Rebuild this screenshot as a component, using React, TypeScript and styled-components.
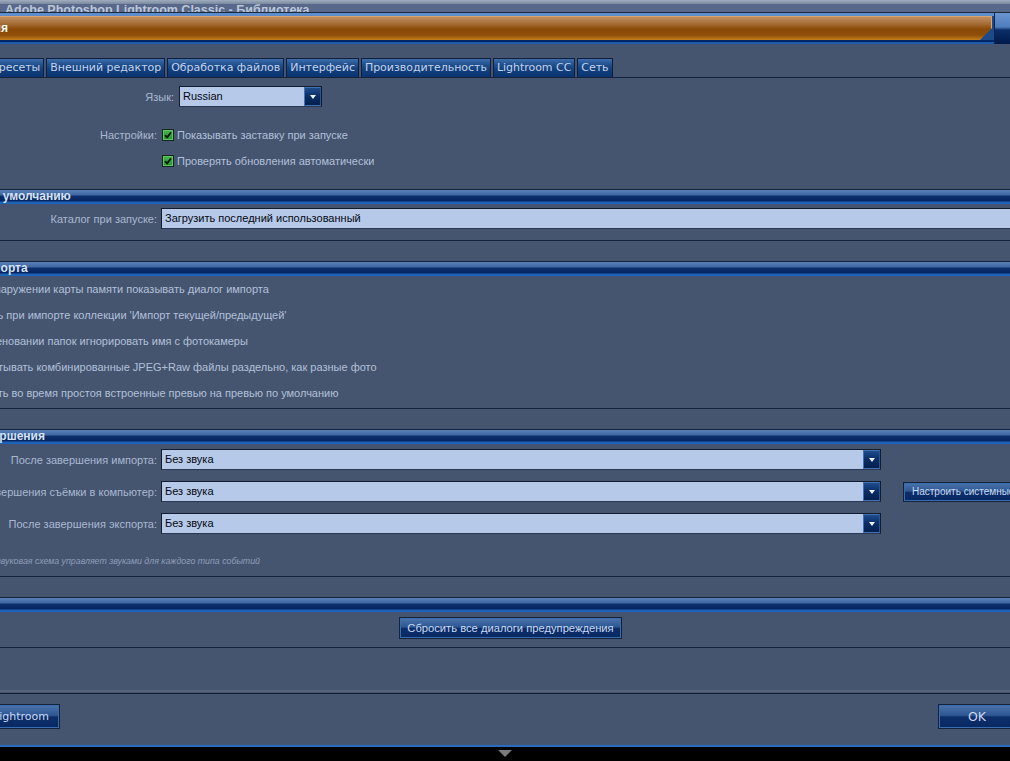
import React from 'react';
import styled, { createGlobalStyle } from 'styled-components';

const GlobalStyle = createGlobalStyle`
  html, body { margin: 0; padding: 0; background: #000; }
  body {
    width: 1010px;
    height: 761px;
    overflow: hidden;
    font-family: "Liberation Sans", Arial, sans-serif;
  }
`;

const Screen = styled.div`
  width: 1010px;
  height: 761px;
  overflow: hidden;
  display: flex;
  flex-direction: column;
  background: #000;
`;

const AppTitleBar = styled.div`
  position: relative;
  flex: none;
  height: 13px;
  box-sizing: border-box;
  overflow: hidden;
  background: #58688a;
  border-bottom: 1px solid #1a2840;

  &::before {
    content: '';
    position: absolute;
    left: 0;
    right: 0;
    top: 0;
    height: 4px;
    z-index: 1;
    background: linear-gradient(#a0adbf, #7a899f);
  }
`;

const AppTitle = styled.div`
  padding-left: 5px;
  margin-top: 3px;
  line-height: 14px;
  white-space: nowrap;
  font: bold 12.5px "Liberation Sans", Arial, sans-serif;
  color: #bcc7d8;
`;

const Dialog = styled.div`
  flex: none;
  height: 734px;
  width: 1212px;
  margin-left: -100px;
  display: flex;
  flex-direction: column;
`;

const DialogHeader = styled.div`
  flex: none;
  height: 31px;
  display: flex;
  gap: 2px;
  background: linear-gradient(#5d8dcb 0 3px, #1d4a8a 3px 27px, #042660 27px 29px, #1b5bb0 29px 31px);
`;

const OrangeBar = styled.div`
  flex: 1;
  margin: 3px 0 4px;
  display: flex;
  align-items: center;
  clip-path: polygon(0 0, 100% 0, 100% 50%, calc(100% - 12px) 100%, 0 100%);
  background: linear-gradient(#c39468 0%, #a8703a 30%, #8a4a08 55%, #8f4f0a 80%, #c47e18 100%);
  box-shadow: inset 0 1px 0 #d9a56c, inset -1px 0 0 #d9a56c;
`;

const TitleSlot = styled.div`
  flex: none;
  width: 108px;
  display: flex;
  justify-content: flex-end;
`;

const DialogTitle = styled.span`
  white-space: nowrap;
  font: bold 12px "Liberation Sans", Arial, sans-serif;
  color: #fff;
`;

const HeaderCap = styled.div`
  flex: none;
  width: 117px;
  border-left: 1px solid #0e2345;
  background: linear-gradient(#6a95cf 0, #4f7dbd 14px, #0b2d66 17px, #001a4d 100%);
`;

const Body = styled.div`
  flex: 1;
  min-height: 0;
  display: flex;
  flex-direction: column;
  background: #46556f;
  border-bottom: 2px solid #2b6cc3;
`;

const TabBar = styled.div`
  flex: none;
  margin-top: 14px;
  height: 20px;
  box-sizing: border-box;
  padding-left: 19px;
  display: flex;
  align-items: flex-end;
  gap: 2px;
  border-bottom: 1px solid #17233a;
`;

const Tab = styled.div<{ $active?: boolean }>`
  height: 19px;
  box-sizing: border-box;
  padding: 0 3px;
  border: 1px solid #0f1f3c;
  border-bottom: 0;
  white-space: nowrap;
  font: 11px "DejaVu Sans", Verdana, sans-serif;
  letter-spacing: -0.03px;
  line-height: 17px;
  color: ${(p) => (p.$active ? '#e0e8f4' : '#c4d3ea')};
  background: ${(p) =>
    p.$active ? '#46556f' : 'linear-gradient(#3e6dac 0, #22518f 30%, #123f7c 60%, #0b3372 100%)'};
`;

const GeneralBlock = styled.div`
  flex: none;
  padding-top: 8px;
  display: flex;
  flex-direction: column;
`;

const FormRow = styled.div<{ $gap: number }>`
  display: flex;
  align-items: center;
  gap: ${(p) => p.$gap}px;
  height: 21px;
`;

const LabelSlot = styled.div<{ $width: number }>`
  flex: none;
  width: ${(p) => p.$width}px;
  display: flex;
  justify-content: flex-end;
  white-space: nowrap;
  font-size: 11px;
  color: #a9b8d1;
`;

const SettingsLabel = styled(LabelSlot)`
  margin-right: 2px;
`;

const Select = styled.div<{ $width?: number }>`
  display: flex;
  height: 21px;
  box-sizing: border-box;
  ${(p) => (p.$width ? `width: ${p.$width}px; flex: none;` : 'flex: 1;')}
  border: 1px solid #121c2e;
  border-bottom-color: #2a3752;
  background: #b6c9e9;
`;

const SelectValue = styled.div`
  flex: 1;
  padding-left: 3px;
  white-space: nowrap;
  overflow: hidden;
  font-size: 11px;
  line-height: 19px;
  color: #05080f;
`;

const SelectArrow = styled.div`
  flex: none;
  width: 15px;
  display: flex;
  align-items: center;
  justify-content: center;
  border: 1px solid #4272b2;
  border-right-color: #2a5594;
  background: linear-gradient(#1f4c8c, #0a2c66 50%, #04204f);

  &::after {
    content: '';
    border-left: 3.5px solid transparent;
    border-right: 3.5px solid transparent;
    border-top: 4px solid #f0f4fa;
  }
`;

const CheckRow = styled.div<{ $indent: number }>`
  height: 26px;
  display: flex;
  align-items: center;
  gap: 3px;
  padding-left: ${(p) => p.$indent}px;
  white-space: nowrap;
`;

const SettingsRows = styled.div`
  margin-top: 15px;
`;

const CheckBox = styled.span`
  flex: none;
  width: 12px;
  height: 12px;
  box-sizing: border-box;
  display: flex;
  align-items: center;
  justify-content: center;
  border: 1px solid #13261a;
  background: linear-gradient(#47b54a, #23952b);
  box-shadow: inset 0 0 0 1px #62c466;
`;

const CheckText = styled.span`
  font-size: 11px;
  color: #b1c0da;
`;

const Section = styled.section`
  flex: none;
  margin-top: 20px;

  &:first-of-type {
    margin-top: 15px;
  }
`;

const SectionHeader = styled.div`
  height: 14px;
  border-top: 1px solid #16223a;
  padding-left: 35px;
  white-space: nowrap;
  font: bold 12px "Liberation Sans", Arial, sans-serif;
  line-height: 13px;
  color: #d7e2f3;
  background: linear-gradient(#5a80b6 0, #3f68a4 5px, #0d2f6a 6px, #062660 11px, #1e63ba 12px, #1e63ba 14px);
`;

const SectionBody = styled.div<{ $top: number; $bottom: number }>`
  padding-top: ${(p) => p.$top}px;
  padding-bottom: ${(p) => p.$bottom}px;
  border-bottom: 1px solid #16223a;
  padding-right: 12px;
`;

const SoundRows = styled.div`
  display: flex;
  flex-direction: column;
  gap: 11px;
`;

const Note = styled.div`
  margin-top: 20px;
  padding-left: 46px;
  height: 14px;
  line-height: 14px;
  white-space: nowrap;
  font-style: italic;
  font-size: 8.8px;
  color: #8e9dba;
`;

const Button = styled.button<{ $size?: 'small' | 'large' }>`
  flex: none;
  box-sizing: border-box;
  height: ${(p) => (p.$size === 'large' ? 25 : p.$size === 'small' ? 20 : 22)}px;
  min-width: ${(p) => (p.$size === 'large' ? 78 : 0)}px;
  padding: 0 ${(p) => (p.$size === 'small' ? 8 : p.$size === 'large' ? 10 : 7)}px;
  margin: 0;
  white-space: nowrap;
  border: 1px solid #15223a;
  box-shadow: inset 0 0 0 1px #3a6cb0;
  background: linear-gradient(#4c74ac 0%, #2d5793 45%, #0c2e6a 52%, #082862 100%);
  color: #cbd9f0;
  font-family: ${(p) =>
    p.$size === 'large' ? '"DejaVu Sans", Verdana, sans-serif' : '"Liberation Sans", Arial, sans-serif'};
  font-size: ${(p) => (p.$size === 'large' ? 11 : p.$size === 'small' ? 10 : 11.2)}px;
  cursor: pointer;
`;

const OkButton = styled(Button)`
  font-size: 12.5px;
`;

const SideButton = styled(Button)`
  margin-left: 18px;
`;

const ResetRow = styled.div`
  display: flex;
  justify-content: center;
  padding-left: 21px;
`;

const Spacer = styled.div`
  flex: 1;
`;

const Footer = styled.div`
  flex: none;
  height: 55px;
  box-sizing: border-box;
  display: flex;
  align-items: flex-start;
  gap: 8px;
  padding: 12px 10px 0 0;
  border-top: 2px solid #56637b;
  background: linear-gradient(#46556f 0 1px, #131d31 1px 2px, #46556f 2px);
`;

const FooterLeft = styled.div`
  flex: none;
  width: 160px;
  display: flex;
  justify-content: flex-end;
`;

const BottomStrip = styled.div`
  flex: 1;
  display: flex;
  justify-content: center;
  padding-top: 3px;
  background: #000;
`;

const DownTriangle = styled.span`
  width: 0;
  height: 0;
  border-left: 7px solid transparent;
  border-right: 7px solid transparent;
  border-top: 7px solid #7b7b7b;
`;

const tabs = [
  'Основные',
  'Пресеты',
  'Внешний редактор',
  'Обработка файлов',
  'Интерфейс',
  'Производительность',
  'Lightroom CC',
  'Сеть',
];

const importOptions = [
  'При обнаружении карты памяти показывать диалог импорта',
  "Выбрать при импорте коллекции 'Импорт текущей/предыдущей'",
  'При именовании папок игнорировать имя с фотокамеры',
  'Обрабатывать комбинированные JPEG+Raw файлы раздельно, как разные фото',
  'Заменить во время простоя встроенные превью на превью по умолчанию',
];

const sounds = [
  { label: 'После завершения импорта:', value: 'Без звука', side: false },
  { label: 'После завершения съёмки в компьютер:', value: 'Без звука', side: true },
  { label: 'После завершения экспорта:', value: 'Без звука', side: false },
];

const Check = () => (
  <CheckBox>
    <svg width="8" height="8" viewBox="0 0 8 8">
      <path d="M1 4.2 L3.1 6.3 L7 1.4" fill="none" stroke="#051a06" strokeWidth="1.8" />
    </svg>
  </CheckBox>
);

const App: React.FC = () => {
  return (
    <Screen>
      <GlobalStyle />
      <AppTitleBar>
        <AppTitle>Adobe Photoshop Lightroom Classic - Библиотека</AppTitle>
      </AppTitleBar>

      <Dialog>
        <DialogHeader>
          <OrangeBar>
            <TitleSlot>
              <DialogTitle>Установки приложения</DialogTitle>
            </TitleSlot>
          </OrangeBar>
          <HeaderCap />
        </DialogHeader>

        <Body>
          <TabBar>
            {tabs.map((t, i) => (
              <Tab key={t} $active={i === 0}>
                {t}
              </Tab>
            ))}
          </TabBar>

          <GeneralBlock>
            <FormRow $gap={5}>
              <LabelSlot $width={274}>Язык:</LabelSlot>
              <Select $width={143}>
                <SelectValue>Russian</SelectValue>
                <SelectArrow />
              </Select>
            </FormRow>
            <SettingsRows>
              <CheckRow $indent={0}>
                <SettingsLabel $width={257}>Настройки:</SettingsLabel>
                <Check />
                <CheckText>Показывать заставку при запуске</CheckText>
              </CheckRow>
              <CheckRow $indent={262}>
                <Check />
                <CheckText>Проверять обновления автоматически</CheckText>
              </CheckRow>
            </SettingsRows>
          </GeneralBlock>

          <Section>
            <SectionHeader>Каталог по умолчанию</SectionHeader>
            <SectionBody $top={4} $bottom={11}>
              <FormRow $gap={4}>
                <LabelSlot $width={257}>Каталог при запуске:</LabelSlot>
                <Select>
                  <SelectValue>Загрузить последний использованный</SelectValue>
                </Select>
              </FormRow>
            </SectionBody>
          </Section>

          <Section>
            <SectionHeader>Опции импорта</SectionHeader>
            <SectionBody $top={0} $bottom={2}>
              {importOptions.map((o) => (
                <CheckRow key={o} $indent={44}>
                  <Check />
                  <CheckText>{o}</CheckText>
                </CheckRow>
              ))}
            </SectionBody>
          </Section>

          <Section>
            <SectionHeader>Звуки завершения</SectionHeader>
            <SectionBody $top={5} $bottom={8}>
              <SoundRows>
                {sounds.map((s) => (
                  <FormRow key={s.label} $gap={4}>
                    <LabelSlot $width={257}>{s.label}</LabelSlot>
                    <Select $width={720}>
                      <SelectValue>{s.value}</SelectValue>
                      <SelectArrow />
                    </Select>
                    {s.side && <SideButton $size="small">Настроить системные звуки…</SideButton>}
                  </FormRow>
                ))}
              </SoundRows>
              <Note>Системная звуковая схема управляет звуками для каждого типа событий</Note>
            </SectionBody>
          </Section>

          <Section>
            <SectionHeader>Подсказки</SectionHeader>
            <SectionBody $top={5} $bottom={8}>
              <ResetRow>
                <Button>Сбросить все диалоги предупреждения</Button>
              </ResetRow>
            </SectionBody>
          </Section>

          <Spacer />

          <Footer>
            <FooterLeft>
              <Button $size="large">Перезапустить Lightroom</Button>
            </FooterLeft>
            <Spacer />
            <OkButton $size="large">OK</OkButton>
            <Button $size="large">Отмена</Button>
          </Footer>
        </Body>
      </Dialog>

      <BottomStrip>
        <DownTriangle />
      </BottomStrip>
    </Screen>
  );
};

export default App;
